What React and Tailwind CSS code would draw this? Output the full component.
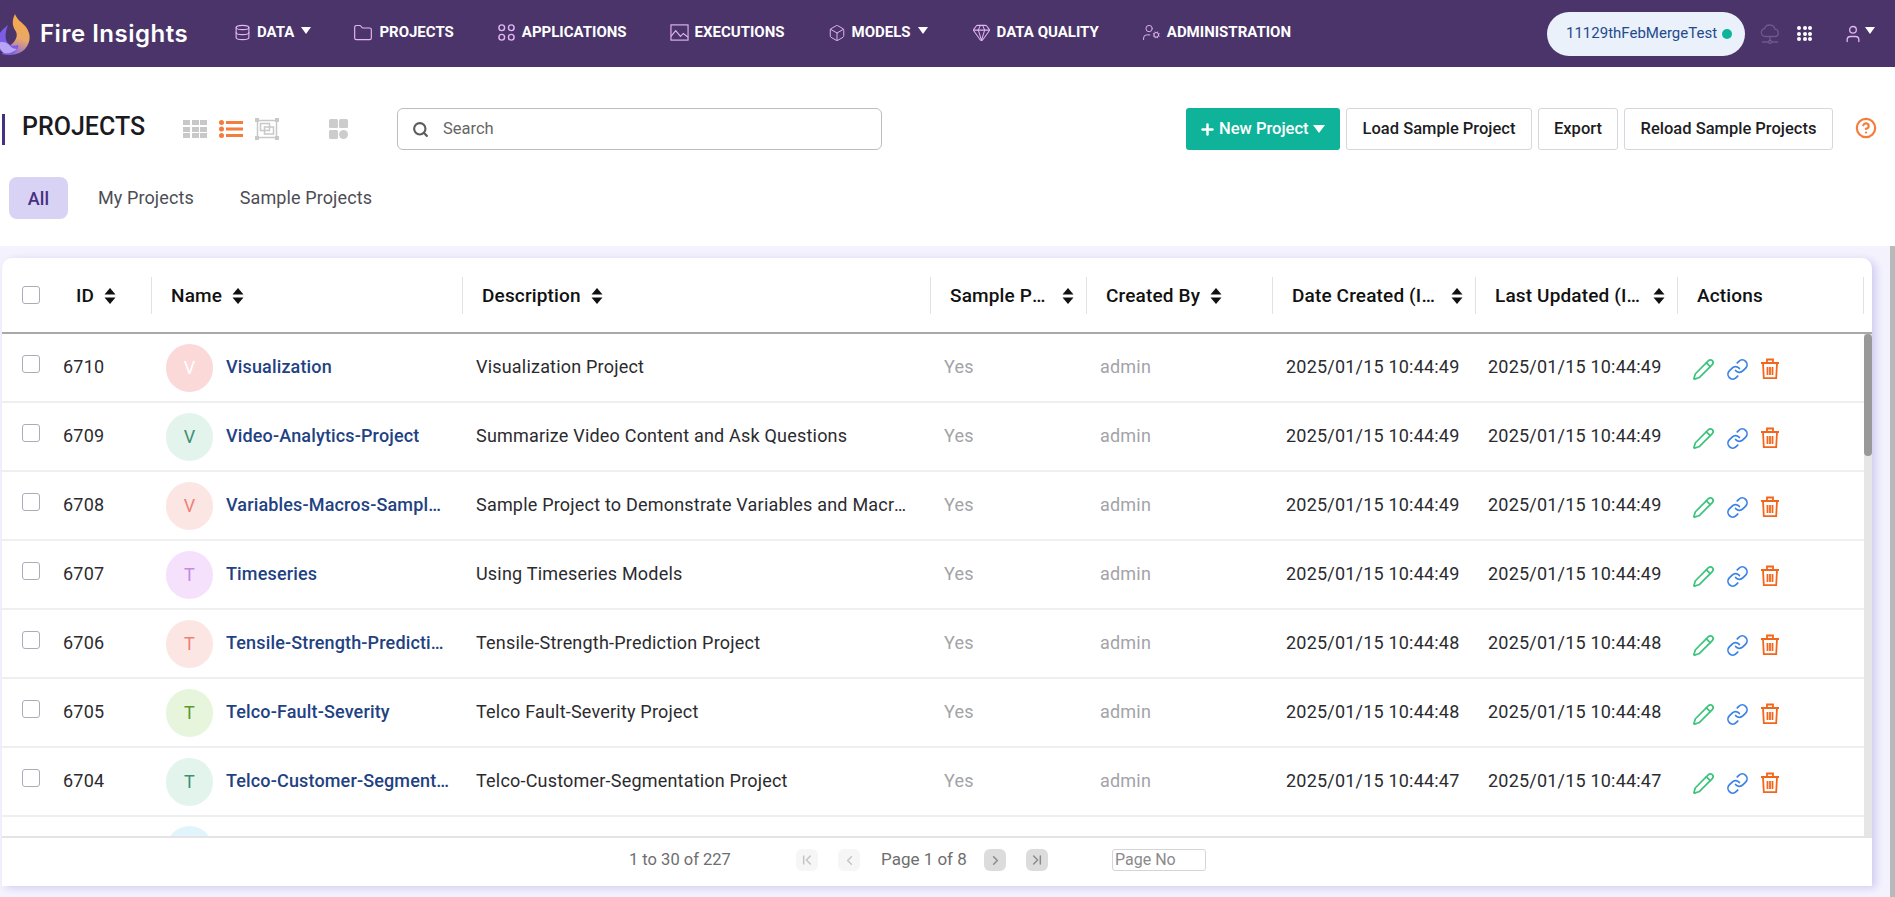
import React from "react";
import { Database, Folder, Box, Gem, UserCog, Search, Plus, Link as LinkIcon, Pencil, CircleHelp, User, ChevronLeft, ChevronRight, ChevronFirst, ChevronLast } from "lucide-react";

const COLS = "grid grid-cols-[48px_102px_311px_468px_156px_186px_203px_202px_186px]";

const rows = [
  ["6710", "V", "bg-[#fcd9d9] text-white", "Visualization", "Visualization Project", "2025/01/15 10:44:49", "2025/01/15 10:44:49"],
  ["6709", "V", "bg-[#e3f4ec] text-[#3f8f74]", "Video-Analytics-Project", "Summarize Video Content and Ask Questions", "2025/01/15 10:44:49", "2025/01/15 10:44:49"],
  ["6708", "V", "bg-[#fce6e3] text-[#ee8079]", "Variables-Macros-Sample-Project", "Sample Project to Demonstrate Variables and Macros in Fire", "2025/01/15 10:44:49", "2025/01/15 10:44:49"],
  ["6707", "T", "bg-[#f5e1fc] text-[#c68ae0]", "Timeseries", "Using Timeseries Models", "2025/01/15 10:44:49", "2025/01/15 10:44:49"],
  ["6706", "T", "bg-[#fce6e3] text-[#ee8079]", "Tensile-Strength-Prediction-Project", "Tensile-Strength-Prediction Project", "2025/01/15 10:44:48", "2025/01/15 10:44:48"],
  ["6705", "T", "bg-[#e6f5dc] text-[#5a9a2c]", "Telco-Fault-Severity", "Telco Fault-Severity Project", "2025/01/15 10:44:48", "2025/01/15 10:44:48"],
  ["6704", "T", "bg-[#e3f4ec] text-[#3f8f74]", "Telco-Customer-Segmentation-Project", "Telco-Customer-Segmentation Project", "2025/01/15 10:44:47", "2025/01/15 10:44:47"],
];

function Logo() {
  return (
    <svg width="32" height="42" viewBox="0 0 32 42" className="shrink-0">
      <defs>
        <linearGradient id="fl" x1="0.5" y1="0" x2="0.3" y2="1">
          <stop offset="0" stopColor="#f6a945" />
          <stop offset="0.55" stopColor="#e9a86a" />
          <stop offset="1" stopColor="#8a63e0" />
        </linearGradient>
      </defs>
      <path d="M15 1c-3 6-3 11 0 16 3 4 2 9-2 13-3 3-7 5-11 11 8 2 17 1 23-5 6-7 6-15 1-22C22 9 17 7 15 1Z" fill="url(#fl)" />
      <path d="M8 12C3 16-1 20-3 26c-1 5 1 11 7 14 3 1 7 1 10 0 3-2 5-5 4-8-5 2-10 0-12-5-1-5 0-10 2-15Z" fill="#7d5de6" />
      <path d="M-2 30c4-2 9-1 12 3 2 2 4 3 7 3-3 3-8 5-13 4-3-2-5-6-6-10Z" fill="#b9a5f5" />
    </svg>
  );
}

function Caret({ className = "" }) {
  return <span className={`inline-block w-0 h-0 border-l-[5px] border-r-[5px] border-t-[7px] border-l-transparent border-r-transparent border-t-white ${className}`} />;
}

function AppsIcon({ className }) {
  return (
    <svg viewBox="0 0 20 20" width="19" height="19" fill="none" stroke="currentColor" strokeWidth="1.5" className={className}>
      <circle cx="5" cy="5" r="3" /><circle cx="15" cy="5" r="3" /><circle cx="5" cy="15" r="3" /><circle cx="15" cy="15" r="3" />
    </svg>
  );
}

function ExecIcon({ className }) {
  return (
    <svg viewBox="0 0 20 20" width="19" height="19" fill="none" stroke="currentColor" strokeWidth="1.2" className={className}>
      <rect x="1" y="2" width="18" height="16" /><path d="M1 14l5-6 5 6 3-3 5 4" />
    </svg>
  );
}

const navItem = "flex items-center gap-[6px] text-white text-[15px] font-bold whitespace-nowrap";
const navIcon = "text-[#e3b5f2]";

function Nav() {
  return (
    <div className="h-[67px] bg-[#4a3469] flex items-center shrink-0 overflow-hidden pr-[20px]">
      <div className="w-[234px] shrink-0 flex items-center self-stretch">
        <Logo />
        <span className="ml-2 text-white text-[24px] font-semibold font-[Inter,sans-serif] tracking-[0.5px]">Fire Insights</span>
      </div>
      <div className="flex items-center gap-[43px] -mt-[2px]">
        <div className={navItem}><Database size={17} strokeWidth={1.6} className={navIcon} />DATA<Caret className="ml-[1px] -mt-[5px]" /></div>
        <div className={`${navItem} -ml-[1px]`}><Folder size={20} strokeWidth={1.4} className={navIcon} />PROJECTS</div>
        <div className={navItem}><AppsIcon className={navIcon} />APPLICATIONS</div>
        <div className={navItem}><ExecIcon className={navIcon} />EXECUTIONS</div>
        <div className={navItem}><Box size={18} strokeWidth={1.3} className={navIcon} />MODELS<Caret className="ml-[1px] -mt-[5px]" /></div>
        <div className={`${navItem} ml-[1px]`}><Gem size={19} strokeWidth={1.3} className={navIcon} />DATA QUALITY</div>
        <div className={navItem}><UserCog size={19} strokeWidth={1.2} className={navIcon} />ADMINISTRATION</div>
      </div>
      <div className="ml-auto shrink-0 w-[198px] h-[44px] rounded-[22px] bg-[#eaf1fb] flex items-center pl-[19px] text-[15px] text-[#1f4a8c] whitespace-nowrap">
        11129thFebMergeTest
        <span className="ml-[5px] w-[10px] h-[10px] rounded-full bg-[#0fb39a]" />
      </div>
      <svg viewBox="0 0 20 20" width="20" height="20" fill="none" stroke="#6d5a88" strokeWidth="1.3" className="ml-[15px] shrink-0">
        <path d="M5 12.5a4 4 0 0 1-.5-7.9A5.5 5.5 0 0 1 15 5.2a3.7 3.7 0 0 1 .4 7.3Z" /><path d="M10 13v3M2 18h6M12 18h6" /><circle cx="10" cy="18" r="1.5" />
      </svg>
      <div className="ml-[17px] grid grid-cols-3 gap-[1.5px] shrink-0">
        {Array.from({ length: 9 }).map((_, i) => <span key={i} className="w-[4px] h-[4px] rounded-full bg-white" />)}
      </div>
      <User size={20} strokeWidth={1.6} className="ml-[31px] shrink-0 text-[#e3b5f2]" />
      <Caret className="ml-[2px] -mt-[6px] shrink-0" />
    </div>
  );
}

function ViewIcons() {
  return (
    <div className="flex items-center ml-[36px]">
      <div className="grid grid-cols-3 gap-[1.5px]">
        {Array.from({ length: 9 }).map((_, i) => <span key={i} className="w-[7px] h-[5px] bg-[#c8c8c8]" />)}
      </div>
      <svg viewBox="0 0 24 18" width="24" height="18" className="ml-[12px]" fill="#f47c3c">
        <circle cx="2.5" cy="2.5" r="2.5" /><circle cx="2.5" cy="9" r="2.5" /><circle cx="2.5" cy="15.5" r="2.5" />
        <rect x="7" y="1" width="17" height="3" /><rect x="7" y="7.5" width="17" height="3" /><rect x="7" y="14" width="17" height="3" />
      </svg>
      <svg viewBox="0 0 24 22" width="24" height="22" className="ml-[12px]" fill="none" stroke="#c8c8c8" strokeWidth="1.5">
        <rect x="2.5" y="2.5" width="19" height="17" /><rect x="5.5" y="5.5" width="9" height="7" /><rect x="9.5" y="9" width="9" height="7" />
        <g fill="#c8c8c8" stroke="none"><rect x="0" y="0" width="4" height="4" /><rect x="20" y="0" width="4" height="4" /><rect x="0" y="18" width="4" height="4" /><rect x="20" y="18" width="4" height="4" /></g>
      </svg>
      <svg viewBox="0 0 19 20" width="19" height="20" className="ml-[50px]" fill="#cccccc">
        <rect x="0" y="0" width="9" height="9" rx="1.5" /><rect x="10" y="0" width="9" height="9" rx="1.5" /><rect x="0" y="11" width="9" height="9" rx="1.5" /><circle cx="14.5" cy="15.5" r="4.5" />
      </svg>
    </div>
  );
}

const outlineBtn = "h-[42px] rounded-[3px] border border-[#d5d6de] bg-white text-[16.5px] font-medium text-[#1d1d1f] flex items-center justify-center whitespace-nowrap";

function Toolbar() {
  return (
    <div className="h-[179px] bg-white shrink-0 flex flex-col">
      <div className="flex items-center mt-[41px] h-[42px]">
        <div className="ml-[2px] w-[3px] h-[31px] bg-[#47307f]" />
        <div className="ml-[17px] text-[25px] font-medium text-[#1b1b1f] leading-none w-[125px] -mt-[5px]">PROJECTS</div>
        <ViewIcons />
        <div className="ml-[49px] w-[485px] h-[42px] rounded-[6px] border border-[#bdbdbd] flex items-center pl-[14px] text-[16.5px] text-[#666]">
          <Search size={17} strokeWidth={3} className="text-[#5c5c5c]" />
          <span className="ml-[14px]">Search</span>
        </div>
        <div className="ml-[304px] h-[42px] w-[154px] rounded-[3px] bg-[#0fb39a] text-white text-[16.5px] font-medium flex items-center pl-[13px] whitespace-nowrap">
          <Plus size={17} strokeWidth={3.5} className="mr-[3px]" />New Project
          <span className="ml-[4px] inline-block w-0 h-0 border-l-[6px] border-r-[6px] border-t-[8px] border-l-transparent border-r-transparent border-t-white" />
        </div>
        <div className={`ml-[6px] w-[186px] ${outlineBtn}`}>Load Sample Project</div>
        <div className={`ml-[6px] w-[80px] ${outlineBtn}`}>Export</div>
        <div className={`ml-[6px] w-[209px] ${outlineBtn}`}>Reload Sample Projects</div>
        <CircleHelp size={22} strokeWidth={2.4} className="ml-[22px] -mt-[3px] text-[#f47c3c]" />
      </div>
      <div className="flex items-center mt-[27px] ml-[9px] text-[18px] tracking-[0.1px] text-[#4d4d55]">
        <div className="w-[59px] h-[42px] rounded-[8px] bg-[#d8d3f5] flex items-center justify-center font-medium text-[#47307f]">All</div>
        <div className="ml-[30px] -mt-[2px]">My Projects</div>
        <div className="ml-[46px] -mt-[2px]">Sample Projects</div>
      </div>
    </div>
  );
}

function Sort() {
  return (
    <svg viewBox="0 0 12 16" width="12" height="16" className="shrink-0" fill="#111">
      <path d="M6 0l5.500 6.500H.5Z" /><path d="M6 16L.5 9.500h11Z" />
    </svg>
  );
}

function HeadCell({ children, pl = "pl-[19px]", textW = "" }) {
  return (
    <div className={`relative flex items-center h-[46px] mt-[2px] ${pl} pr-[13px] gap-[10px]`}>
      <span className={`text-[19px] font-medium tracking-[0.15px] text-[#111] truncate ${textW}`}>{children}</span>
      <Sort />
      <span className="absolute right-0 top-[4px] bottom-[5px] w-px bg-[#e2e2e2]" />
    </div>
  );
}

function Checkbox({ className = "" }) {
  return <span className={`block w-[18px] h-[18px] rounded-[3px] border border-[#a9adb8] bg-white ml-[20px] ${className}`} />;
}

function Trash() {
  return (
    <svg viewBox="0 0 20 22" width="20" height="22" fill="none" stroke="#f2661b" strokeWidth="1.8">
      <path d="M1 5h18M7 5V1.500h6V5M3 5l.8 15.200h12.400L17 5M7.500 9v8M10 9v8M12.500 9v8" />
    </svg>
  );
}

function Row({ r }) {
  return (
    <div className={`${COLS} h-[69px] items-center border-b-2 border-[#efefef] text-[18px] tracking-[0.2px] text-[#2b2b2f]`}>
      <Checkbox className="-mt-[7px]" />
      <div className="pl-[13px] -mt-[3px]">{r[0]}</div>
      <div className="flex items-center pl-[14px] pr-[13px] min-w-0">
        <span className={`w-[47px] h-[48px] rounded-full shrink-0 flex items-center justify-center text-[18px] ${r[2]}`}>{r[1]}</span>
        <span className="ml-[13px] truncate font-medium tracking-[0.15px] -mt-[3px] text-[#1f4283]">{r[3]}</span>
      </div>
      <div className="pl-[13px] pr-[20px] truncate -mt-[3px]">{r[4]}</div>
      <div className="pl-[13px] text-[#a3a3a8] -mt-[3px]">Yes</div>
      <div className="pl-[13px] text-[#a3a3a8] -mt-[3px]">admin</div>
      <div className="pl-[13px] whitespace-nowrap -mt-[3px]">{r[5]}</div>
      <div className="pl-[12px] whitespace-nowrap -mt-[3px]">{r[6]}</div>
      <div className="pl-[14px] flex items-center gap-[11px] mt-[3px]">
        <Pencil size={23} strokeWidth={1.8} className="text-[#3cc47c]" />
        <LinkIcon size={23} strokeWidth={1.8} className="text-[#3b82e6]" />
        <Trash />
      </div>
    </div>
  );
}

function PagerBtn({ on, children }) {
  return (
    <span className={`w-[22px] h-[22px] rounded-[6px] flex items-center justify-center ${on ? "bg-[#dcdcdc] text-[#8a8a8a]" : "bg-[#f6f6f6] text-[#c4c4c4]"}`}>{children}</span>
  );
}

function Footer() {
  return (
    <div className="h-[50px] border-t-2 border-[#e4e4e4] bg-white flex items-center shrink-0 text-[16.5px] text-[#6e6e6e] pl-[627px] pb-[4px]">
      <span className="w-[167px] whitespace-nowrap">1 to 30 of 227</span>
      <PagerBtn><ChevronFirst size={16} strokeWidth={2.2} /></PagerBtn>
      <span className="ml-[20px]"><PagerBtn><ChevronLeft size={15} strokeWidth={2.4} /></PagerBtn></span>
      <span className="ml-[21px] w-[103px] whitespace-nowrap text-[17px]">Page 1 of 8</span>
      <PagerBtn on><ChevronRight size={15} strokeWidth={2.4} /></PagerBtn>
      <span className="ml-[20px]"><PagerBtn on><ChevronLast size={16} strokeWidth={2.2} /></PagerBtn></span>
      <span className="ml-[64px] w-[94px] h-[22px] rounded-[3px] border border-[#d5d5d5] flex items-center pl-[2px] text-[16px] text-[#8a8a8a]">Page No</span>
    </div>
  );
}

export default function App() {
  return (
    <div className="relative w-[1895px] h-[897px] overflow-hidden flex flex-col bg-white font-[Roboto,sans-serif]">
      <Nav />
      <Toolbar />
      <div className="flex-1 min-h-0 bg-[#f4f3fd] pt-[12px] pb-[11px] pl-[2px] pr-[23px] flex">
        <div className="flex-1 flex flex-col bg-white rounded-t-[10px] shadow-[4px_2px_8px_#cfcbf0] overflow-hidden">
          <div className={`${COLS} h-[76px] items-center border-b-2 border-[#a9a9a9] shrink-0`}>
            <Checkbox />
            <HeadCell pl="pl-[26px]">ID</HeadCell>
            <HeadCell>Name</HeadCell>
            <HeadCell>Description</HeadCell>
            <HeadCell textW="w-[102px]">Sample Project</HeadCell>
            <HeadCell>Created By</HeadCell>
            <HeadCell textW="w-[149px]">Date Created (IST)</HeadCell>
            <HeadCell textW="w-[149px]">Last Updated (IST)</HeadCell>
            <div className="relative flex items-center h-[46px] mt-[2px] pl-[19px] text-[19px] font-medium tracking-[0.15px] text-[#111]">
              Actions
              <span className="absolute right-0 top-[4px] bottom-[5px] w-px bg-[#e2e2e2]" />
            </div>
          </div>
          <div className="relative flex-1 min-h-0 overflow-hidden">
            {rows.map((r) => <Row key={r[0]} r={r} />)}
            <div className={`${COLS} h-[69px] items-start pt-[9px]`}>
              <span />
              <span />
              <div className="pl-[14px]"><span className="block w-[47px] h-[48px] rounded-full bg-[#e1f3fb]" /></div>
            </div>
            <div className="absolute right-0 top-0 bottom-0 w-[8px] bg-[#e6e6e6]">
              <div className="h-[122px] rounded-[4px] bg-[#999999]" />
            </div>
          </div>
          <Footer />
        </div>
      </div>
      <div className="absolute right-0 top-[246px] bottom-0 w-[5px] bg-[#b9b9b9]" />
    </div>
  );
}
